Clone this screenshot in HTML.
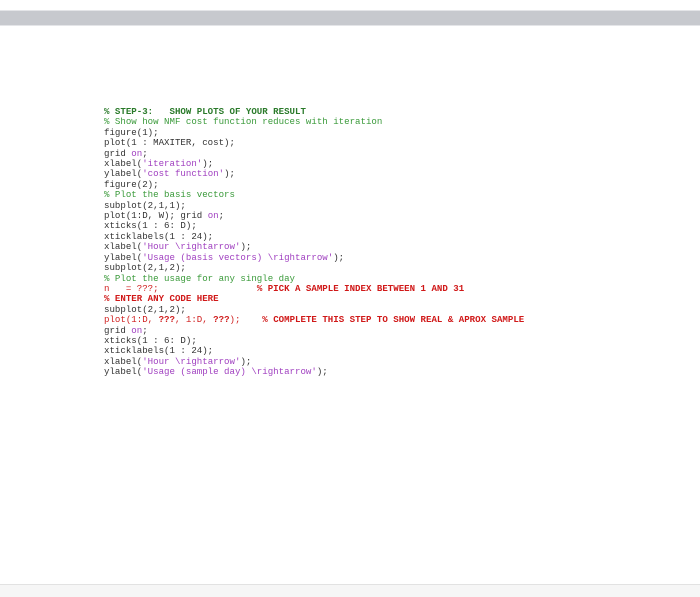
<!DOCTYPE html>
<html><head><style>
body{margin:0;width:700px;height:596px;background:#fff;position:relative;overflow:hidden}
.bar{position:absolute;left:0;top:10px;width:700px;height:16px;background:#c7c9ce;border-top:1px solid #e4e5e8;border-bottom:1px solid #e4e5e8;box-sizing:border-box}
.foot{position:absolute;left:0;top:584px;width:700px;height:12px;background:#f6f6f6;border-top:1px solid #e2e2e2}
pre{position:absolute;left:104px;top:107px;margin:0;font-family:"Liberation Mono",monospace;font-size:9.1px;line-height:10.4px;color:#333}
.g{color:#3a9a3a}.gb{color:#2a7a2a;font-weight:bold}.p{color:#a040c0}.r{color:#d02020}.rb{color:#d01818;font-weight:bold}
</style></head><body>
<div class="bar"></div>
<pre><span class="gb">% STEP-3:   SHOW PLOTS OF YOUR RESULT</span>
<span class="g">% Show how NMF cost function reduces with iteration</span>
figure(1);
plot(1 : MAXITER, cost);
grid <span class="p">on</span>;
xlabel(<span class="p">'iteration'</span>);
ylabel(<span class="p">'cost function'</span>);
figure(2);
<span class="g">% Plot the basis vectors</span>
subplot(2,1,1);
plot(1:D, W); grid <span class="p">on</span>;
xticks(1 : 6: D);
xticklabels(1 : 24);
xlabel(<span class="p">'Hour \rightarrow'</span>);
ylabel(<span class="p">'Usage (basis vectors) \rightarrow'</span>);
subplot(2,1,2);
<span class="g">% Plot the usage for any single day</span>
<span class="r">n   = ???;</span>                  <span class="rb">% PICK A SAMPLE INDEX BETWEEN 1 AND 31</span>
<span class="rb">% ENTER ANY CODE HERE</span>
subplot(2,1,2);
<span class="r">plot(1:D, <b>???</b>, 1:D, <b>???</b>);</span>    <span class="rb">% COMPLETE THIS STEP TO SHOW REAL &amp; APROX SAMPLE</span>
grid <span class="p">on</span>;
xticks(1 : 6: D);
xticklabels(1 : 24);
xlabel(<span class="p">'Hour \rightarrow'</span>);
ylabel(<span class="p">'Usage (sample day) \rightarrow'</span>);</pre>
<div class="foot"></div>
</body></html>
